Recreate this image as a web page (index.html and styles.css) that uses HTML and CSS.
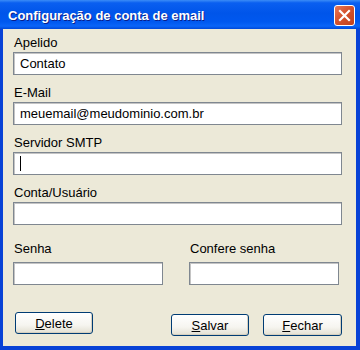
FILE: index.html
```html
<!DOCTYPE html>
<html lang="pt-BR">
<head>
  <meta charset="UTF-8">
  <title>Configuração de conta de email</title>
  <link rel="stylesheet" href="styles.css">
</head>
<body>
  <div class="window">
    <div class="titlebar">
      <span class="title">Configuração de conta de email</span>
      <span class="close-btn">
        <svg width="13" height="13" viewBox="0 0 13 13">
          <path d="M2 2 L11 11 M11 2 L2 11" stroke="#fff" stroke-width="2.2" stroke-linecap="square"/>
        </svg>
      </span>
    </div>

    <div class="client">
      <div class="form-group">
        <label>Apelido</label>
        <div class="field">Contato</div>
      </div>
      <div class="form-group">
        <label>E-Mail</label>
        <div class="field">meuemail@meudominio.com.br</div>
      </div>
      <div class="form-group">
        <label>Servidor SMTP</label>
        <div class="field"><span class="caret"></span></div>
      </div>
      <div class="form-group">
        <label>Conta/Usuário</label>
        <div class="field"></div>
      </div>

      <div class="pass-row">
        <div class="form-group">
          <label>Senha</label>
          <div class="field"></div>
        </div>
        <div class="form-group">
          <label>Confere senha</label>
          <div class="field"></div>
        </div>
      </div>

      <div class="button-row">
        <button class="btn btn-delete"><u>D</u>elete</button>
        <div class="right-buttons">
          <button class="btn"><u>S</u>alvar</button>
          <button class="btn btn-close"><u>F</u>echar</button>
        </div>
      </div>
    </div>
  </div>
</body>
</html>
```

FILE: styles.css
```css
* {
  box-sizing: border-box;
}

body {
  margin: 0;
  padding: 0;
  font-family: "Liberation Sans", Arial, sans-serif;
  font-size: 13px;
  color: #000;
  background: #fff;
}

.window {
  width: 360px;
  height: 350px;
  display: flex;
  flex-direction: column;
  background: #0a46df;
  border-left: 3px solid #0842d6;
  border-right: 4px solid #0842d6;
  border-bottom: 4px solid #0842d6;
  box-shadow: inset -1px 0 0 #1a5cf0, inset 1px 0 0 #1a5cf0;
}

.titlebar {
  height: 29px;
  margin: 0 -4px 0 -3px;
  padding: 1px 5px 0 8px;
  display: flex;
  align-items: center;
  justify-content: space-between;
  background: linear-gradient(to bottom, #3b8cf7 0%, #0a5ff0 10%, #0055ea 45%, #0058ef 75%, #0a65f8 90%, #0048d8 100%);
}

.title {
  color: #fff;
  font-weight: bold;
  font-size: 13px;
  text-shadow: 1px 1px 0 #0a1e8a;
}

.close-btn {
  width: 21px;
  height: 21px;
  border: 1px solid #fff;
  border-radius: 3px;
  background: linear-gradient(135deg, #e8795a 0%, #d5532e 45%, #c1411c 100%);
  display: flex;
  align-items: center;
  justify-content: center;
}

.client {
  flex: 1;
  background: #ece9d8;
  padding: 6px 14px 0 10px;
  display: flex;
  flex-direction: column;
}

.form-group {
  margin-bottom: 10px;
}

.form-group label {
  display: block;
  line-height: 15px;
  margin-bottom: 2px;
  padding-left: 1px;
}

.field {
  height: 23px;
  background: #fff;
  border: 1px solid #7f8790;
  box-shadow: inset 1px 1px 0 #c4c4c4;
  padding: 0 6px;
  line-height: 21px;
  display: flex;
  align-items: center;
  white-space: nowrap;
}

.caret {
  width: 1px;
  height: 15px;
  background: #000;
}

.pass-row {
  margin-top: 6px;
  display: flex;
  gap: 26px;
}

.pass-row .form-group {
  width: 150px;
}

.pass-row .form-group label {
  margin-bottom: 6px;
}

.button-row {
  margin-top: 19px;
  display: flex;
  justify-content: space-between;
  padding-left: 2px;
}

.right-buttons {
  display: flex;
  gap: 14px;
}

.btn {
  width: 78px;
  height: 22px;
  padding: 0;
  font-family: "Liberation Sans", Arial, sans-serif;
  font-size: 13px;
  color: #000;
  border: 1px solid #003c74;
  border-radius: 3px;
  background: linear-gradient(to bottom, #ffffff 0%, #f6f5f0 60%, #e3e0d2 100%);
  box-shadow: inset -1px -1px 0 #d6d0c0;
}

.btn-delete {
  margin-top: -2px;
}

.btn-close {
  width: 79px;
}
```
